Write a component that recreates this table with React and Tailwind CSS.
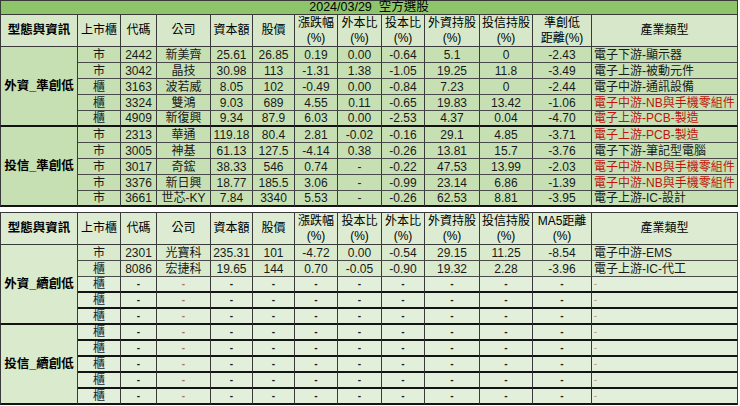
import React from "react";

const widths = [78, 43, 36, 54, 42, 42, 43, 44, 43, 55, 53, 59, 146];

const top = [
  {
    group: "外資_準創低",
    rows: [
      ["市", "2442", "新美齊", "25.61", "26.85", "0.19", "0.00", "-0.64", "5.1", "0", "-2.43", "電子下游-顯示器", false],
      ["市", "3042", "晶技", "30.98", "113", "-1.31", "1.38", "-1.05", "19.25", "11.8", "-3.49", "電子上游-被動元件", false],
      ["櫃", "3163", "波若威", "8.05", "102", "-0.49", "0.00", "-0.84", "7.23", "0", "-2.44", "電子中游-通訊設備", false],
      ["櫃", "3324", "雙鴻", "9.03", "689", "4.55", "0.11", "-0.65", "19.83", "13.42", "-1.06", "電子中游-NB與手機零組件", true],
      ["櫃", "4909", "新復興", "9.34", "87.9", "6.03", "0.00", "-2.53", "4.37", "0.04", "-4.70", "電子上游-PCB-製造", true],
    ],
  },
  {
    group: "投信_準創低",
    rows: [
      ["市", "2313", "華通", "119.18", "80.4", "2.81", "-0.02", "-0.16", "29.1", "4.85", "-3.71", "電子上游-PCB-製造", true],
      ["市", "3005", "神基", "61.13", "127.5", "-4.14", "0.38", "-0.26", "13.81", "15.7", "-3.76", "電子下游-筆記型電腦", false],
      ["市", "3017", "奇鋐", "38.33", "546", "0.74", "-", "-0.22", "47.53", "13.99", "-2.03", "電子中游-NB與手機零組件", true],
      ["市", "3376", "新日興", "18.77", "185.5", "3.06", "-", "-0.99", "23.14", "6.86", "-1.39", "電子中游-NB與手機零組件", true],
      ["市", "3661", "世芯-KY", "7.84", "3340", "5.53", "-", "-0.26", "62.53", "8.81", "-3.95", "電子上游-IC-設計", false],
    ],
  },
];

const empty = ["櫃", "-", "-", "-", "-", "-", "-", "-", "-", "-", "-", "-", false, true];

const bottom = [
  {
    group: "外資_續創低",
    rows: [
      ["市", "2301", "光寶科", "235.31", "101", "-4.72", "0.00", "-0.54", "29.15", "11.25", "-8.54", "電子中游-EMS", false],
      ["櫃", "8086", "宏捷科", "19.65", "144", "0.70", "-0.05", "-0.90", "19.32", "2.28", "-3.96", "電子上游-IC-代工", false],
      empty,
      empty,
      empty,
    ],
  },
  {
    group: "投信_續創低",
    rows: [empty, empty, empty, empty, empty],
  },
];

const font = {
  fontFamily: "'Liberation Sans', 'Noto Sans CJK TC', sans-serif",
};

function Colgroup() {
  return (
    <colgroup>
      {widths.map((w, i) => (
        <col key={i} style={{ width: w }} />
      ))}
    </colgroup>
  );
}

function Header({ cols, bg, h, topBorder }) {
  const bt = topBorder ? "border-t border-t-[#3a3a3a]" : "";
  return (
    <tr className={bg}>
      <th className={`${h} ${bt} border-l border-r border-b border-[#3a3a3a] p-0 font-bold text-[12.5px] text-black`}>
        型態與資訊
      </th>
      {cols.map((c, i) => (
        <th
          key={i}
          className={`${h} ${bt} border-r border-b border-[#3a3a3a] p-0 font-normal text-[12px] leading-[15px] text-black`}
        >
          {c.map((l, j) => (
            <div key={j}>{l}</div>
          ))}
        </th>
      ))}
    </tr>
  );
}

function Body({ groups, bg, emptyBg }) {
  return groups.map((g, gi) =>
    g.rows.map((r, ri) => {
      const isEmpty = r[13];
      const rowBg = isEmpty ? emptyBg : bg;
      const lastInGroup = ri === g.rows.length - 1;
      const bb =
        lastInGroup || isEmpty
          ? "border-b-2 border-b-[#141414]"
          : "border-b border-b-[#4a4a4a]";
      return (
        <tr key={gi + "-" + ri} className={rowBg}>
          {ri === 0 && (
            <td
              rowSpan={g.rows.length}
              className={`border-l border-r border-[#3a3a3a] border-b-2 border-b-[#141414] p-0 text-center align-middle font-bold text-[12.5px] text-black ${bg}`}
            >
              {g.group}
            </td>
          )}
          {r.slice(0, 11).map((v, i) => (
            <td
              key={i}
              className={`h-[16px] border-r border-r-[#3a3a3a] ${bb} p-0 text-center leading-[14px] ${
                isEmpty && i > 0 ? "text-[10px] font-bold" : "text-[12px]"
              } ${isEmpty && i === 2 ? "text-[#b07060]" : "text-[#1a1a1a]"}`}
            >
              {v}
            </td>
          ))}
          <td
            className={`h-[16px] border-r border-r-[#3a3a3a] ${bb} p-0 pl-[2px] text-left leading-[14px] ${
              isEmpty ? "text-[9px] text-[#b07060]" : "text-[12px]"
            } ${r[12] ? "text-[#c0140c]" : isEmpty ? "" : "text-[#1a1a1a]"}`}
          >
            {r[11]}
          </td>
        </tr>
      );
    })
  );
}

export default function App() {
  return (
    <div className="w-[740px] h-[406px] bg-white overflow-hidden" style={font}>
      <table className="table-fixed border-separate border-spacing-0 w-[738px]">
        <Colgroup />
        <thead>
          <tr className="bg-[#8ec46a]">
            <th
              colSpan={13}
              className="h-[15px] border border-[#3a3a3a] p-0 text-[12.5px] font-normal leading-[13px] text-black text-center"
            >
              2024/03/29&nbsp;&nbsp;空方選股
            </th>
          </tr>
          <Header
            bg="bg-[#d6e8c9]"
            h="h-[32px]"
            cols={[
              ["上市櫃"],
              ["代碼"],
              ["公司"],
              ["資本額"],
              ["股價"],
              ["漲跌幅", "(%)"],
              ["外本比", "(%)"],
              ["投本比", "(%)"],
              ["外資持股", "(%)"],
              ["投信持股", "(%)"],
              ["準創低", "距離(%)"],
              ["產業類型"],
            ]}
          />
        </thead>
        <tbody>
          <Body groups={top} bg="bg-[#c6e0b4]" emptyBg="bg-[#c6e0b4]" />
        </tbody>
      </table>
      <div className="h-[5px]" />
      <table className="table-fixed border-separate border-spacing-0 w-[738px]">
        <Colgroup />
        <thead>
          <Header
            bg="bg-[#dcebd2]"
            h="h-[33px]"
            topBorder
            cols={[
              ["上市櫃"],
              ["代碼"],
              ["公司"],
              ["資本額"],
              ["股價"],
              ["漲跌幅", "(%)"],
              ["投本比", "(%)"],
              ["外本比", "(%)"],
              ["外資持股", "(%)"],
              ["投信持股", "(%)"],
              ["MA5距離", "(%)"],
              ["產業類型"],
            ]}
          />
        </thead>
        <tbody>
          <Body groups={bottom} bg="bg-[#d9eacd]" emptyBg="bg-[#e2efda]" />
        </tbody>
      </table>
    </div>
  );
}
